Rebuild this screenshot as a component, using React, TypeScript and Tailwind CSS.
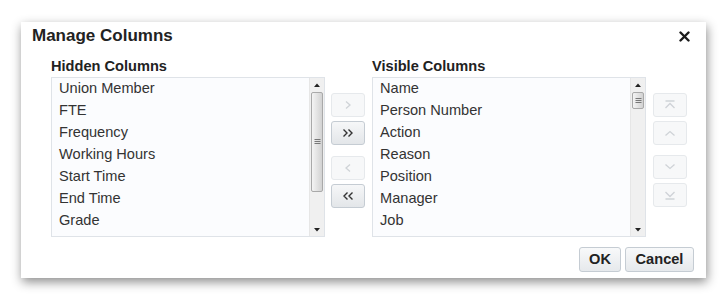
import React from "react";

const hidden = ["Union Member", "FTE", "Frequency", "Working Hours", "Start Time", "End Time", "Grade"];
const visible = ["Name", "Person Number", "Action", "Reason", "Position", "Manager", "Job"];

function Grip() {
  return (
    <svg width="7" height="6" viewBox="0 0 7 6">
      <path d="M0.5 0.5H6.5M0.5 2.5H6.5M0.5 4.5H6.5" stroke="#777" strokeWidth="1" />
    </svg>
  );
}

function ListBox({ items, thumbTop, thumbH }: { items: string[]; thumbTop: number; thumbH: number }) {
  return (
    <div className="w-[274px] h-[160px] border border-[#dfe3e8] bg-[#fbfcfe] flex">
      <div className="flex-1 flex flex-col">
        {items.map((t) => (
          <div key={t} className="h-[22px] flex items-center pl-[7px] pb-[3px] text-[14.6px] text-[#333] leading-[18px]">
            {t}
          </div>
        ))}
      </div>
      <div className="w-[15px] h-full bg-[#f0f0f0] border-l border-[#e6e6e6] flex flex-col items-center">
        <div className="h-[13px] flex items-center justify-center">
          <svg width="6" height="4" viewBox="0 0 6 4"><path d="M0 4L3 0.5L6 4Z" fill="#222" /></svg>
        </div>
        <div
          style={{ height: thumbH, marginTop: thumbTop }}
          className="w-[12px] rounded-[2px] border border-[#a9a9a9] bg-gradient-to-r from-[#f4f4f4] to-[#d2d2d2] flex items-center justify-center"
        >
          <Grip />
        </div>
        <div className="flex-1" />
        <div className="h-[12px] flex items-center justify-center">
          <svg width="6" height="4" viewBox="0 0 6 4"><path d="M0 0L3 3.5L6 0Z" fill="#222" /></svg>
        </div>
      </div>
    </div>
  );
}

function IconBtn({ children, disabled }: { children: React.ReactNode; disabled?: boolean }) {
  return (
    <div
      className={
        disabled
          ? "w-[34px] h-[24px] rounded-[3px] border border-[#e6e9ec] bg-[#f7f8f9] flex items-center justify-center"
          : "w-[34px] h-[24px] rounded-[3px] border border-[#c5ccd3] bg-gradient-to-b from-[#f6f7f8] to-[#e3e6e9] flex items-center justify-center"
      }
    >
      {children}
    </div>
  );
}

const dis = "#cfd3d7";
const en = "#333";

export default function App() {
  return (
    <div className="w-[727px] h-[302px] bg-white pt-[22px] pl-[21px]" style={{ fontFamily: '"Liberation Sans", Arial, sans-serif' }}>
      <div className="w-[685px] h-[256px] bg-white shadow-[1px_4px_10px_rgba(0,0,0,0.45)] flex flex-col pt-[5px] pl-[11px] pr-[12px] pb-[6px]">
        <div className="flex justify-between items-center h-[18px]">
          <div className="text-[17px] font-bold text-[#222] leading-[18px]">Manage Columns</div>
          <svg width="11" height="11" viewBox="0 0 11 11" className="mr-[4px] mt-[1px]">
            <path d="M1.5 1.5L9.5 9.5M9.5 1.5L1.5 9.5" stroke="#1a1a1a" strokeWidth="2.4" strokeLinecap="round" />
          </svg>
        </div>
        <div className="flex mt-[13px] pl-[19px]">
          <div className="flex flex-col">
            <div className="h-[16px] leading-[16px] text-[14.6px] font-bold text-[#222] mb-[3px]">Hidden Columns</div>
            <ListBox items={hidden} thumbTop={1} thumbH={100} />
          </div>
          <div className="flex flex-col ml-[6px] pt-[35px]">
            <IconBtn disabled>
              <svg width="8" height="10" viewBox="0 0 8 10"><path d="M2 1.5L6 5L2 8.5" stroke={dis} strokeWidth="1.3" fill="none" /></svg>
            </IconBtn>
            <div className="h-[4px]" />
            <IconBtn>
              <svg width="12" height="10" viewBox="0 0 12 10"><path d="M1.5 1.5L5 5L1.5 8.5M6.5 1.5L10 5L6.5 8.5" stroke={en} strokeWidth="1.4" fill="none" /></svg>
            </IconBtn>
            <div className="h-[11px]" />
            <IconBtn disabled>
              <svg width="8" height="10" viewBox="0 0 8 10"><path d="M6 1.5L2 5L6 8.5" stroke={dis} strokeWidth="1.3" fill="none" /></svg>
            </IconBtn>
            <div className="h-[4px]" />
            <IconBtn>
              <svg width="12" height="10" viewBox="0 0 12 10"><path d="M5.5 1.5L2 5L5.5 8.5M10.5 1.5L7 5L10.5 8.5" stroke={en} strokeWidth="1.4" fill="none" /></svg>
            </IconBtn>
          </div>
          <div className="flex flex-col ml-[7px]">
            <div className="h-[16px] leading-[16px] text-[14.6px] font-bold text-[#222] mb-[3px]">Visible Columns</div>
            <ListBox items={visible} thumbTop={1} thumbH={17} />
          </div>
          <div className="flex flex-col ml-[7px] pt-[35px]">
            <IconBtn disabled>
              <svg width="12" height="10" viewBox="0 0 12 10"><path d="M1.5 1H10.5M1.5 8L6 3.5L10.5 8" stroke={dis} strokeWidth="1.3" fill="none" /></svg>
            </IconBtn>
            <div className="h-[4px]" />
            <IconBtn disabled>
              <svg width="12" height="8" viewBox="0 0 12 8"><path d="M1.5 6.5L6 2.5L10.5 6.5" stroke={dis} strokeWidth="1.3" fill="none" /></svg>
            </IconBtn>
            <div className="h-[10px]" />
            <IconBtn disabled>
              <svg width="12" height="8" viewBox="0 0 12 8"><path d="M1.5 1.5L6 5.5L10.5 1.5" stroke={dis} strokeWidth="1.3" fill="none" /></svg>
            </IconBtn>
            <div className="h-[4px]" />
            <IconBtn disabled>
              <svg width="12" height="10" viewBox="0 0 12 10"><path d="M1.5 2L6 6.5L10.5 2M1.5 9H10.5" stroke={dis} strokeWidth="1.3" fill="none" /></svg>
            </IconBtn>
          </div>
        </div>
        <div className="flex justify-end mt-auto gap-[4px]">
          <div className="w-[42px] h-[25px] rounded-[3px] border border-[#c5ccd3] bg-gradient-to-b from-[#f8f9fa] to-[#e6e9ec] flex items-center justify-center text-[14.6px] font-bold text-[#222]">OK</div>
          <div className="w-[69px] h-[25px] rounded-[3px] border border-[#c5ccd3] bg-gradient-to-b from-[#f8f9fa] to-[#e6e9ec] flex items-center justify-center text-[14.6px] font-bold text-[#222]">Cancel</div>
        </div>
      </div>
    </div>
  );
}
